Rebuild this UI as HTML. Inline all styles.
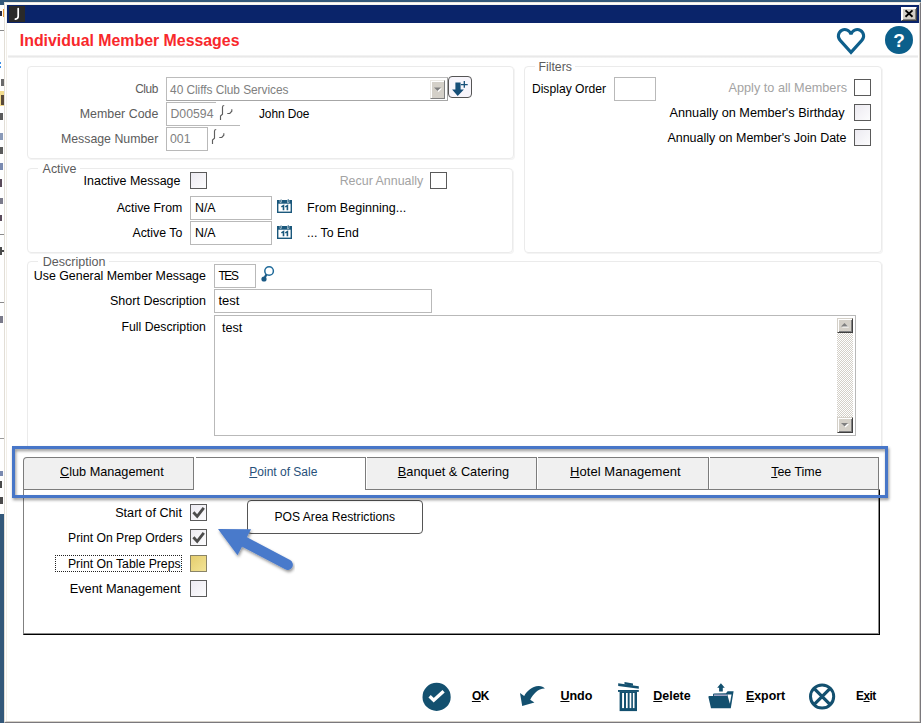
<!DOCTYPE html>
<html lang="en"><head><meta charset="utf-8"><title>Individual Member Messages</title>
<style>
html,body{margin:0;padding:0}
body{width:921px;height:723px;position:relative;overflow:hidden;background:#fff;font-family:"Liberation Sans",sans-serif;font-size:12.4px}
div,svg,span{position:absolute;box-sizing:border-box}
.t{white-space:nowrap;line-height:18px;height:18px}
.t u{position:static;text-decoration:underline;text-underline-offset:0.5px}
.sb{background:#33587a}
.grp{border:1px solid #ebebeb;border-radius:4px;box-shadow:1px 1px 0 #f4f4f4}
.leg{background:#fff;height:4px}
.inp{border:1px solid #b9b9b9;background:#fff}
.cb{width:17px;height:17px;border:1px solid #5a5a5a;background:linear-gradient(135deg,#eceaf1,#fcfcfd)}
.cb.w{background:#fff}
.cb.y{background:linear-gradient(135deg,#e5cd6e,#f3e496);border-color:#8a8468}
.tab{top:457px;height:32px;border-top:1px solid #7c7c7c;border-right:1px solid #7c7c7c;background:#f0f0f0}
.btn3d{background:#d4d0c8;border:1px solid;border-color:#d4d0c8 #404040 #404040 #d4d0c8;box-shadow:inset 1px 1px 0 #fff,inset -1px -1px 0 #808080}

</style></head>
<body>
<!-- desktop / other window slivers -->
<div class="sb" style="left:0;top:0;width:921px;height:2px"></div>
<div class="sb" style="left:0;top:0;width:4px;height:5px"></div>
<div class="sb" style="left:0;top:514px;width:4px;height:209px"></div>
<div style="left:0;top:30px;width:4px;height:1px;background:#8a8a8a"></div>
<div style="left:0;top:438px;width:4px;height:1px;background:#9a9a9a"></div>
<div style="left:0;top:91px;width:4px;height:15px;background:#f3dc8e"></div>
<!-- slivers of window behind -->
<div style="left:0px;top:11px;width:2px;height:5px;background:#2a2a40"></div>
<div style="left:3px;top:9px;width:1px;height:8px;background:#e8962e"></div>
<div style="left:0px;top:62px;width:1px;height:2px;background:#3a8ee6"></div>
<div style="left:0px;top:66px;width:1px;height:2px;background:#3a8ee6"></div>
<div style="left:1px;top:79px;width:3px;height:7px;background:#6a6a6a"></div>
<div style="left:1px;top:95px;width:3px;height:10px;background:#5a4a3a"></div>
<div style="left:0px;top:113px;width:3px;height:7px;background:#5a5a5a"></div>
<div style="left:0px;top:133px;width:3px;height:7px;background:#8a9ab8"></div>
<div style="left:0px;top:147px;width:3px;height:7px;background:#5a5a5a"></div>
<div style="left:0px;top:163px;width:3px;height:7px;background:#7a8ab0"></div>
<div style="left:0px;top:179px;width:2px;height:8px;background:#5a4a5a"></div>
<div style="left:0px;top:198px;width:3px;height:6px;background:#7a7a8a"></div>
<div style="left:0px;top:215px;width:2px;height:6px;background:#5a4a5a"></div>
<div style="left:0px;top:234px;width:4px;height:1px;background:#8a8a8a"></div>
<div style="left:0px;top:247px;width:2px;height:8px;background:#4a4a4a"></div>
<div style="left:0px;top:250px;width:4px;height:2px;background:#4a4a4a"></div>
<div style="left:0px;top:302px;width:4px;height:1px;background:#8a8a8a"></div>
<div style="left:0px;top:316px;width:3px;height:7px;background:#7a7a8a"></div>
<div style="left:0px;top:471px;width:3px;height:5px;background:#7a8ab0"></div>
<div style="left:0px;top:481px;width:2px;height:7px;background:#4a4a4a"></div>
<div style="left:0px;top:497px;width:3px;height:7px;background:#4a4a4a"></div>
<!-- window frame -->
<div style="left:4px;top:2px;width:917px;height:721px;border-left:1px solid #e2ded6;border-top:1px solid #ece8e0;border-right:1px solid #7a787c;border-bottom:1px solid #7a787c"></div>
<div style="left:5px;top:3px;width:915px;height:719px;border-left:1px solid #fff;border-top:1px solid #fff;border-right:1px solid #d4d0c8;border-bottom:1px solid #d4d0c8"></div>
<div style="left:6px;top:4px;width:913px;height:717px;border-left:1px solid #f2efe8;border-top:1px solid #f6f3ec"></div>
<!-- title bar -->
<div style="left:7px;top:5px;width:912px;height:18px;background:#0a246a"></div>
<div style="left:9px;top:6px;width:16px;height:16px;background:#2a2a2a"></div>
<svg style="left:9px;top:6px" width="16" height="16" viewBox="0 0 16 16"><path d="M9.2 2.6 V10.2 Q9.2 12.6 6.4 13.2" fill="none" stroke="#fff" stroke-width="1.7" stroke-linecap="round"/></svg>
<div class="btn3d" style="left:901px;top:7px;width:16px;height:14px;border-color:#fff #404040 #404040 #fff"></div>
<svg style="left:901px;top:7px" width="16" height="14" viewBox="0 0 16 14"><path d="M4.5 3.4 L11.5 9.8 M11.5 3.4 L4.5 9.8" stroke="#000" stroke-width="1.9" fill="none"/></svg>
<!-- header separator -->
<div style="left:8px;top:55px;width:910px;height:3px;background:linear-gradient(180deg,#f6f6f6,#e9e9e9 50%,#f6f6f6)"></div>
<!-- header icons -->
<svg style="left:0;top:0" width="921" height="60" viewBox="0 0 921 60"><path d="M851 34.4 A6.4 6.4 0 1 0 840.2 40.4 L851 52.4 L861.8 40.4 A6.4 6.4 0 1 0 851 34.4 Z" fill="none" stroke="#0e5f8c" stroke-width="3.1" stroke-linejoin="miter"/></svg>
<div style="left:885px;top:26px;width:28px;height:28px;border-radius:50%;background:#0b5f8b"></div>
<div class="t" style="left:885px;top:29px;width:28px;height:24px;line-height:24px;text-align:center;color:#fff;font-weight:bold;font-size:19px">?</div>

<!-- group boxes -->
<div class="grp" style="left:27px;top:66px;width:487px;height:93px"></div>
<div class="grp" style="left:524px;top:66px;width:358px;height:187px"></div>
<div class="leg" style="left:535px;top:64px;width:40px"></div>
<div class="grp" style="left:27px;top:168px;width:486px;height:85px"></div>
<div class="leg" style="left:38px;top:166px;width:42px"></div>
<div class="grp" style="left:27px;top:261px;width:855px;height:188px;border-bottom-left-radius:0;border-bottom-right-radius:0"></div>
<div class="leg" style="left:38px;top:259px;width:71px"></div>

<!-- group 1 inputs -->
<div class="inp" style="left:166px;top:77px;width:282px;height:24px;border-color:#bcbcbc #a6a6a6 #a6a6a6 #bcbcbc"></div>
<div class="btn3d" style="left:430px;top:80px;width:15px;height:19px;border-color:#ebe9e4 #808080 #808080 #ebe9e4;box-shadow:inset 1px 1px 0 #fff"></div>
<svg style="left:431px;top:80px" width="14" height="18" viewBox="0 0 14 18"><path d="M4 8.5 H11 L7.5 12 Z" fill="#fff"/><path d="M3 7.5 H10 L6.5 11 Z" fill="#808080"/></svg>
<div style="left:448px;top:76px;width:24px;height:22px;border:1px solid #555;border-radius:4px;background:#f7f5fb"></div>
<svg style="left:448px;top:76px" width="24" height="22" viewBox="0 0 24 22"><path d="M7.4 6.4 H12.6 V13.6 H15.9 L9.7 20 L4.1 13.6 H7.4 Z" fill="#164f78"/><path d="M12.9 8.7 H19.7 M16.3 5.1 V11.8" stroke="#164f78" stroke-width="1.3" fill="none"/></svg>
<div style="left:166px;top:102px;width:50px;height:24px;border:1px solid #b9b9b9;border-right:none"></div>
<div style="left:166px;top:125px;width:74px;height:1px;background:#b9b9b9"></div>
<div class="inp" style="left:166px;top:127px;width:42px;height:24px"></div>
<svg style="left:218px;top:103px" width="16" height="19" viewBox="0 0 16 19"><path d="M6.2 2.5 Q4.5 2.5 4.5 4 V11.2 L2.5 13 V17" fill="none" stroke="#5e5e5e" stroke-width="1.15"/><path d="M13.8 6.3 V8.2 L11.8 10.5 H9.3" fill="none" stroke="#5e5e5e" stroke-width="1.15"/></svg>
<svg style="left:210px;top:127px" width="16" height="19" viewBox="0 0 16 19"><path d="M6.2 2.5 Q4.5 2.5 4.5 4 V11.2 L2.5 13 V17" fill="none" stroke="#5e5e5e" stroke-width="1.15"/><path d="M13.8 6.3 V8.2 L11.8 10.5 H9.3" fill="none" stroke="#5e5e5e" stroke-width="1.15"/></svg>

<!-- filters -->
<div class="inp" style="left:614px;top:77px;width:42px;height:24px"></div>
<div class="cb w" style="left:854px;top:79px"></div>
<div class="cb" style="left:854px;top:104px"></div>
<div class="cb" style="left:854px;top:129px"></div>

<!-- active -->
<div class="cb" style="left:190px;top:172px"></div>
<div class="cb w" style="left:430px;top:172px"></div>
<div class="inp" style="left:190px;top:196px;width:82px;height:24px"></div>
<div class="inp" style="left:190px;top:221px;width:82px;height:24px"></div>
<svg style="left:277px;top:199px" width="15" height="14" viewBox="0 0 15 14"><rect x="0.7" y="1.7" width="13.6" height="11.6" fill="#fff" stroke="#1b587c" stroke-width="1.4"/><rect x="0.7" y="1.7" width="13.6" height="3" fill="#1b587c"/><rect x="3" y="0" width="1.6" height="3.4" fill="#1b587c" stroke="#fff" stroke-width=".5"/><rect x="10.4" y="0" width="1.6" height="3.4" fill="#1b587c" stroke="#fff" stroke-width=".5"/><path d="M4.4 7.9 L6.5 6.6 V11.3 M8.3 7.9 L10.4 6.6 V11.3" fill="none" stroke="#1b587c" stroke-width="1.6"/></svg>
<svg style="left:277px;top:225px" width="15" height="14" viewBox="0 0 15 14"><rect x="0.7" y="1.7" width="13.6" height="11.6" fill="#fff" stroke="#1b587c" stroke-width="1.4"/><rect x="0.7" y="1.7" width="13.6" height="3" fill="#1b587c"/><rect x="3" y="0" width="1.6" height="3.4" fill="#1b587c" stroke="#fff" stroke-width=".5"/><rect x="10.4" y="0" width="1.6" height="3.4" fill="#1b587c" stroke="#fff" stroke-width=".5"/><path d="M4.4 7.9 L6.5 6.6 V11.3 M8.3 7.9 L10.4 6.6 V11.3" fill="none" stroke="#1b587c" stroke-width="1.6"/></svg>


<!-- description -->
<div class="inp" style="left:214px;top:264px;width:42px;height:24px"></div>
<svg style="left:260px;top:265px" width="16" height="19" viewBox="0 0 16 19"><circle cx="9.1" cy="6" r="4.3" fill="#fff" stroke="#1f6a9a" stroke-width="1.5"/><path d="M6.3 9.6 L4.4 13.4" stroke="#1b5a85" stroke-width="2.2"/><circle cx="4" cy="14" r="2.6" fill="#1b5a85"/></svg>
<div class="inp" style="left:214px;top:289px;width:218px;height:24px"></div>
<div class="inp" style="left:214px;top:315px;width:642px;height:121px"></div>
<div style="left:837px;top:318px;width:16px;height:115px;background:repeating-conic-gradient(#fff 0% 25%, #d4d0c8 0% 50%) 0 0/2px 2px"></div>
<div class="btn3d" style="left:837px;top:318px;width:16px;height:15px"></div>
<div class="btn3d" style="left:837px;top:417px;width:16px;height:16px"></div>
<svg style="left:837px;top:318px" width="16" height="15" viewBox="0 0 16 15"><path d="M5 9.5 H12 L8.5 6 Z" fill="#fff"/><path d="M4 8.5 H11 L7.5 5 Z" fill="#808080"/></svg>
<svg style="left:837px;top:417px" width="16" height="16" viewBox="0 0 16 16"><path d="M5 7 H12 L8.5 10.5 Z" fill="#fff"/><path d="M4 6 H11 L7.5 9.5 Z" fill="#808080"/></svg>

<!-- tab panel -->
<div style="left:23px;top:489px;width:857px;height:146px;border-left:1px solid #808080;border-right:1px solid #000;border-bottom:1px solid #000;background:#fff;box-shadow:inset -1px -1px 0 #8c8c8c"></div>
<div style="left:23px;top:489px;width:171px;height:1px;background:#7c7c7c"></div>
<div style="left:365px;top:489px;width:515px;height:1px;background:#7c7c7c"></div>
<div class="tab" style="left:23px;width:171px;border-left:1px solid #7c7c7c;border-top-left-radius:4px"></div>
<div class="tab" style="left:196px;width:170px;background:#fff;height:33px"></div>
<div class="tab" style="left:367px;width:170px"></div>
<div class="tab" style="left:538px;width:171px"></div>
<div class="tab" style="left:710px;width:169px"></div>

<!-- panel content -->
<div class="cb" style="left:190px;top:504px"></div>
<div class="cb" style="left:190px;top:529px"></div>
<div class="cb y" style="left:190px;top:555px"></div>
<div class="cb" style="left:190px;top:580px"></div>
<div style="left:55px;top:555px;width:127px;height:17px;border:1px dotted #222"></div>
<div style="left:247px;top:500px;width:176px;height:34px;border:1px solid #555;border-radius:4px;background:#fff"></div>

<!-- overlay svg: checks, annotation, footer icons -->
<svg style="left:0;top:0" width="921" height="723" viewBox="0 0 921 723">
<defs><filter id="sh" x="-10%" y="-20%" width="120%" height="150%"><feDropShadow dx="1" dy="2" stdDeviation="1.6" flood-color="#000" flood-opacity=".42"/></filter></defs>
<path d="M193.4 512.2 L197.2 516.4 L203.8 507.8" fill="none" stroke="#4c4c4c" stroke-width="2.8"/>
<path d="M193.4 537.2 L197.2 541.4 L203.8 532.8" fill="none" stroke="#4c4c4c" stroke-width="2.8"/>
<g filter="url(#sh)">
<rect x="13.5" y="447.5" width="873" height="49" fill="none" stroke="#4676c8" stroke-width="3"/>
</g>
<g filter="url(#sh)">
<path d="M218 529 L251.1 529.3 L245.6 539.6 L287.6 564.7 L243.4 544 L237.5 555.3 Z" fill="#4a7acb"/>
<path d="M244.6 542 L287.6 564.7" stroke="#4a7acb" stroke-width="10.5" stroke-linecap="round" fill="none"/>
</g>
<!-- OK -->
<circle cx="436.6" cy="696.9" r="14.1" fill="#13506f"/>
<path d="M429.6 696.3 L433.7 700.3 L443.6 691.2" fill="none" stroke="#fff" stroke-width="3.3"/>
<!-- Undo -->
<path d="M520 692.9 L524.2 695.9 C527 691 532 686.2 538.5 686 C541.5 685.9 543.5 687 544.9 688.5 C538 688.3 533.5 694 530.2 699.7 L534.4 702.4 L522.2 705.9 Z" fill="#13506f"/>
<!-- Delete -->
<g fill="#13506f">
<path d="M618.2 683.3 L638.8 686.2 L638.8 688.8 L618.2 685.9 Z"/>
<path d="M624.5 682 L633 683.4 L633 685.8 L624.5 684.4 Z"/>
<rect x="618" y="690" width="20.8" height="1.9"/>
<rect x="619.6" y="691.5" width="17.4" height="19.6"/>
</g>
<g fill="#fff"><rect x="622.1" y="693" width="1.9" height="15.1"/><rect x="626" y="693" width="1.7" height="15.1"/><rect x="629.6" y="693" width="1.7" height="15.1"/><rect x="632.9" y="693" width="1.6" height="15.1"/></g>
<!-- Export -->
<g fill="#13506f">
<path d="M720.9 683.3 L724.8 687.7 H722.8 V691.6 H719.1 V687.7 H717.2 Z"/>
<path d="M713 694.6 Q713 693.4 714.2 693.4 L726 693.2 L727.6 691.2 H733.6 L730.8 708.2 H711 L708.4 697 Q708.3 696.1 709.4 696.1 H713 Z"/>
</g>
<path d="M713.9 694.4 H727 V696 H713.9 Z" fill="#9ba2c2"/>
<path d="M727.3 694.6 H731.5 L729.9 703.8 Z" fill="#fff"/>
<!-- Exit -->
<circle cx="822.1" cy="696.5" r="11.6" fill="none" stroke="#13506f" stroke-width="3"/>
<path d="M814 688.4 L830.2 704.6 M830.2 688.4 L814 704.6" stroke="#13506f" stroke-width="3.2" fill="none"/>
</svg>

<!-- text -->
<div class="t" style="top:32.00px;font-size:15.88px;color:#f8282c;font-weight:bold;left:19.8px;">Individual Member Messages</div>
<div class="t" style="top:80.00px;font-size:11.90px;color:#5c5c5c;letter-spacing:-0.442px;right:763.1px;">Club</div>
<div class="t" style="top:105.00px;font-size:12.40px;color:#5c5c5c;right:762.7px;">Member Code</div>
<div class="t" style="top:130.00px;font-size:12.35px;color:#5c5c5c;right:762.7px;">Message Number</div>
<div class="t" style="top:81.00px;font-size:11.90px;color:#808080;letter-spacing:-0.048px;left:170.1px;">40 Cliffs Club Services</div>
<div class="t" style="top:105.00px;font-size:12.27px;color:#808080;left:170.5px;">D00594</div>
<div class="t" style="top:105.00px;font-size:11.90px;color:#000;letter-spacing:-0.076px;left:259.0px;">John Doe</div>
<div class="t" style="top:130.00px;font-size:12.28px;color:#808080;letter-spacing:0.010px;left:170.0px;">001</div>
<div class="t" style="top:58.00px;font-size:12.27px;color:#5c5c5c;left:538.5px;">Filters</div>
<div class="t" style="top:80.00px;font-size:12.15px;color:#000;left:531.9px;">Display Order</div>
<div class="t" style="top:79.00px;font-size:12.69px;color:#a3a3a3;right:74.0px;">Apply to all Members</div>
<div class="t" style="top:104.00px;font-size:12.70px;color:#000;right:76.3px;">Annually on Member's Birthday</div>
<div class="t" style="top:129.00px;font-size:12.48px;color:#000;right:74.5px;">Annually on Member's Join Date</div>
<div class="t" style="top:160.00px;font-size:12.45px;color:#5c5c5c;left:42.6px;">Active</div>
<div class="t" style="top:172.00px;font-size:12.45px;color:#000;right:740.6px;">Inactive Message</div>
<div class="t" style="top:199.00px;font-size:12.32px;color:#000;right:738.7px;">Active From</div>
<div class="t" style="top:224.00px;font-size:12.35px;color:#000;right:738.7px;">Active To</div>
<div class="t" style="top:199.00px;font-size:12.36px;color:#000;left:195.0px;">N/A</div>
<div class="t" style="top:224.00px;font-size:12.36px;color:#000;left:195.0px;">N/A</div>
<div class="t" style="top:172.00px;font-size:12.43px;color:#a3a3a3;right:497.8px;">Recur Annually</div>
<div class="t" style="top:199.00px;font-size:12.56px;color:#000;left:307.1px;">From Beginning...</div>
<div class="t" style="top:224.00px;font-size:12.29px;color:#000;left:307.1px;">... To End</div>
<div class="t" style="top:253.00px;font-size:12.55px;color:#5c5c5c;left:42.7px;">Description</div>
<div class="t" style="top:267.00px;font-size:12.40px;color:#000;right:715.1px;">Use General Member Message</div>
<div class="t" style="top:292.00px;font-size:12.50px;color:#000;right:715.1px;">Short Description</div>
<div class="t" style="top:318.00px;font-size:12.25px;color:#000;right:715.1px;">Full Description</div>
<div class="t" style="top:267.00px;font-size:11.90px;color:#000;letter-spacing:-1.280px;left:218.4px;">TES</div>
<div class="t" style="top:292.00px;font-size:13.00px;color:#000;letter-spacing:0.033px;left:218.4px;">test</div>
<div class="t" style="top:319.00px;font-size:12.59px;color:#000;left:222.0px;">test</div>
<div class="t" style="top:463.00px;font-size:12.69px;color:#000;left:60.0px;"><u>C</u>lub Management</div>
<div class="t" style="top:463.00px;font-size:12.01px;color:#27507a;left:249.3px;"><u>P</u>oint of Sale</div>
<div class="t" style="top:463.00px;font-size:12.76px;color:#000;left:397.8px;"><u>B</u>anquet &amp; Catering</div>
<div class="t" style="top:463.00px;font-size:13.00px;color:#000;letter-spacing:0.047px;left:570.1px;"><u>H</u>otel Management</div>
<div class="t" style="top:463.00px;font-size:12.45px;color:#000;left:771.2px;"><u>T</u>ee Time</div>
<div class="t" style="top:508.00px;font-size:12.11px;color:#000;left:274.5px;">POS Area Restrictions</div>
<div class="t" style="top:504.00px;font-size:12.65px;color:#000;right:739.1px;">Start of Chit</div>
<div class="t" style="top:529.00px;font-size:12.20px;color:#000;right:738.5px;">Print On Prep Orders</div>
<div class="t" style="top:555.00px;font-size:12.24px;color:#000;right:740.4px;">Print On Table Preps</div>
<div class="t" style="top:580.00px;font-size:12.81px;color:#000;right:740.4px;">Event Management</div>
<div class="t" style="top:687.00px;font-size:11.90px;color:#000;letter-spacing:-0.372px;font-weight:bold;left:471.9px;"><u>O</u>K</div>
<div class="t" style="top:687.00px;font-size:12.56px;color:#000;font-weight:bold;left:560.4px;"><u>U</u>ndo</div>
<div class="t" style="top:687.00px;font-size:12.46px;color:#000;font-weight:bold;left:653.3px;"><u>D</u>elete</div>
<div class="t" style="top:687.00px;font-size:12.35px;color:#000;font-weight:bold;left:746.0px;"><u>E</u>xport</div>
<div class="t" style="top:687.00px;font-size:11.90px;color:#000;letter-spacing:-0.553px;font-weight:bold;left:856.1px;">E<u>x</u>it</div>
</body></html>
